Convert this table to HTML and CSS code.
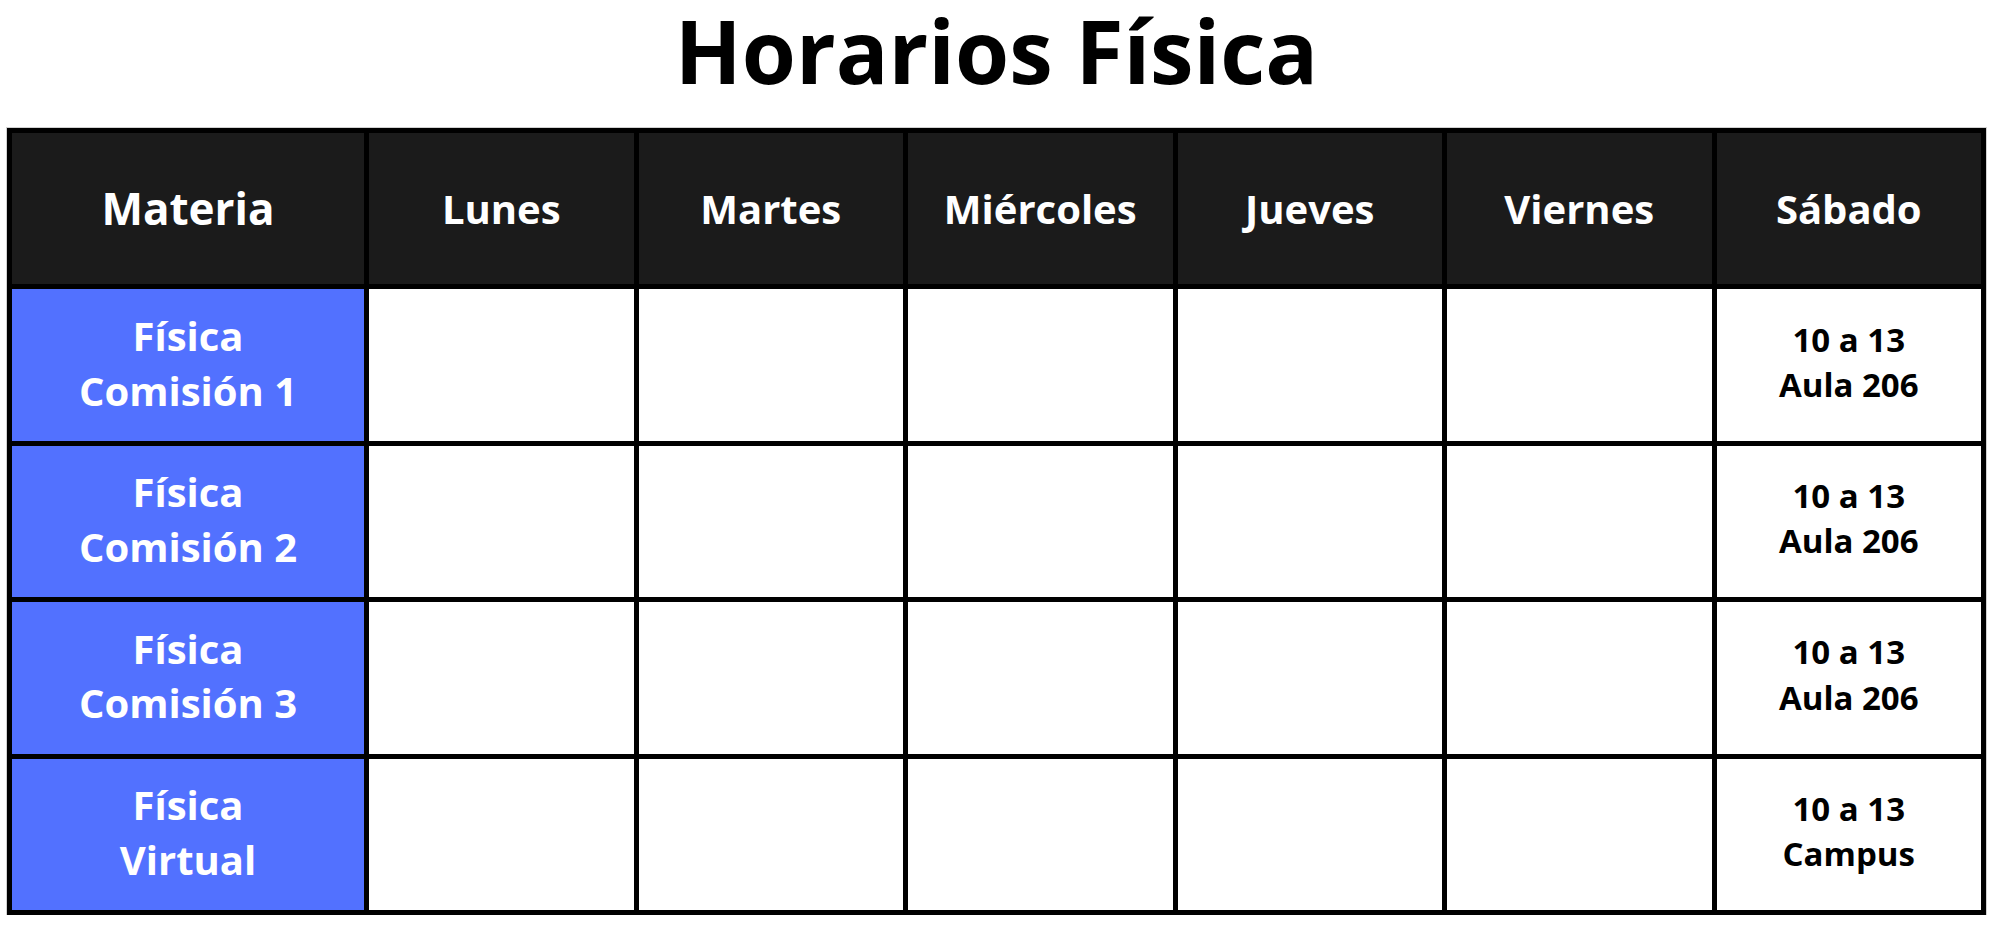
FILE: index.html
```html
<!DOCTYPE html>
<html lang="es">
<head>
<meta charset="utf-8">
<title>Horarios Física</title>
<link rel="stylesheet" href="styles.css">
</head>
<body>
<main class="page">
  <h1 class="title">Horarios Física</h1>
  <div class="schedule">
    <div class="cell head head-main">Materia</div>
    <div class="cell head">Lunes</div>
    <div class="cell head">Martes</div>
    <div class="cell head">Miércoles</div>
    <div class="cell head">Jueves</div>
    <div class="cell head">Viernes</div>
    <div class="cell head">Sábado</div>

    <div class="cell subject">Física<br>Comisión 1</div>
    <div class="cell"></div><div class="cell"></div><div class="cell"></div><div class="cell"></div><div class="cell"></div>
    <div class="cell slot">10 a 13<br>Aula 206</div>

    <div class="cell subject">Física<br>Comisión 2</div>
    <div class="cell"></div><div class="cell"></div><div class="cell"></div><div class="cell"></div><div class="cell"></div>
    <div class="cell slot">10 a 13<br>Aula 206</div>

    <div class="cell subject">Física<br>Comisión 3</div>
    <div class="cell"></div><div class="cell"></div><div class="cell"></div><div class="cell"></div><div class="cell"></div>
    <div class="cell slot">10 a 13<br>Aula 206</div>

    <div class="cell subject">Física<br>Virtual</div>
    <div class="cell"></div><div class="cell"></div><div class="cell"></div><div class="cell"></div><div class="cell"></div>
    <div class="cell slot">10 a 13<br>Campus</div>
  </div>
</main>
</body>
</html>
```
FILE: styles.css
```css
html, body {
  margin: 0;
  padding: 0;
  background: #ffffff;
}

body {
  font-family: "Open Sans", "Liberation Sans", sans-serif;
  font-weight: 700;
  color: #000000;
}

.page {
  padding: 6px 11px 0 7px;
}

.title {
  margin: 0 0 34px 0;
  font-size: 87.5px;
  line-height: 88px;
  font-weight: 700;
  text-align: center;
  color: #000000;
}

.schedule {
  box-sizing: border-box;
  display: grid;
  grid-template-columns: 352px repeat(6, 1fr);
  grid-template-rows: repeat(5, 1fr);
  gap: 5px;
  padding: 5px;
  height: 787px;
  background: #000000;
  box-shadow: 0 0 0 1px rgba(0, 0, 0, 0.18);
}

.cell {
  display: flex;
  align-items: center;
  justify-content: center;
  text-align: center;
  background: #ffffff;
}

.head {
  background: #1b1b1b;
  color: #ffffff;
  font-size: 40px;
}

.head-main {
  font-size: 44px;
  padding-bottom: 2px;
}

.subject {
  background: #5271ff;
  color: #ffffff;
  font-size: 40px;
  line-height: 1.37;
  padding-bottom: 3px;
}

.slot {
  font-size: 33px;
  line-height: 1.38;
  padding-bottom: 6px;
}
```
